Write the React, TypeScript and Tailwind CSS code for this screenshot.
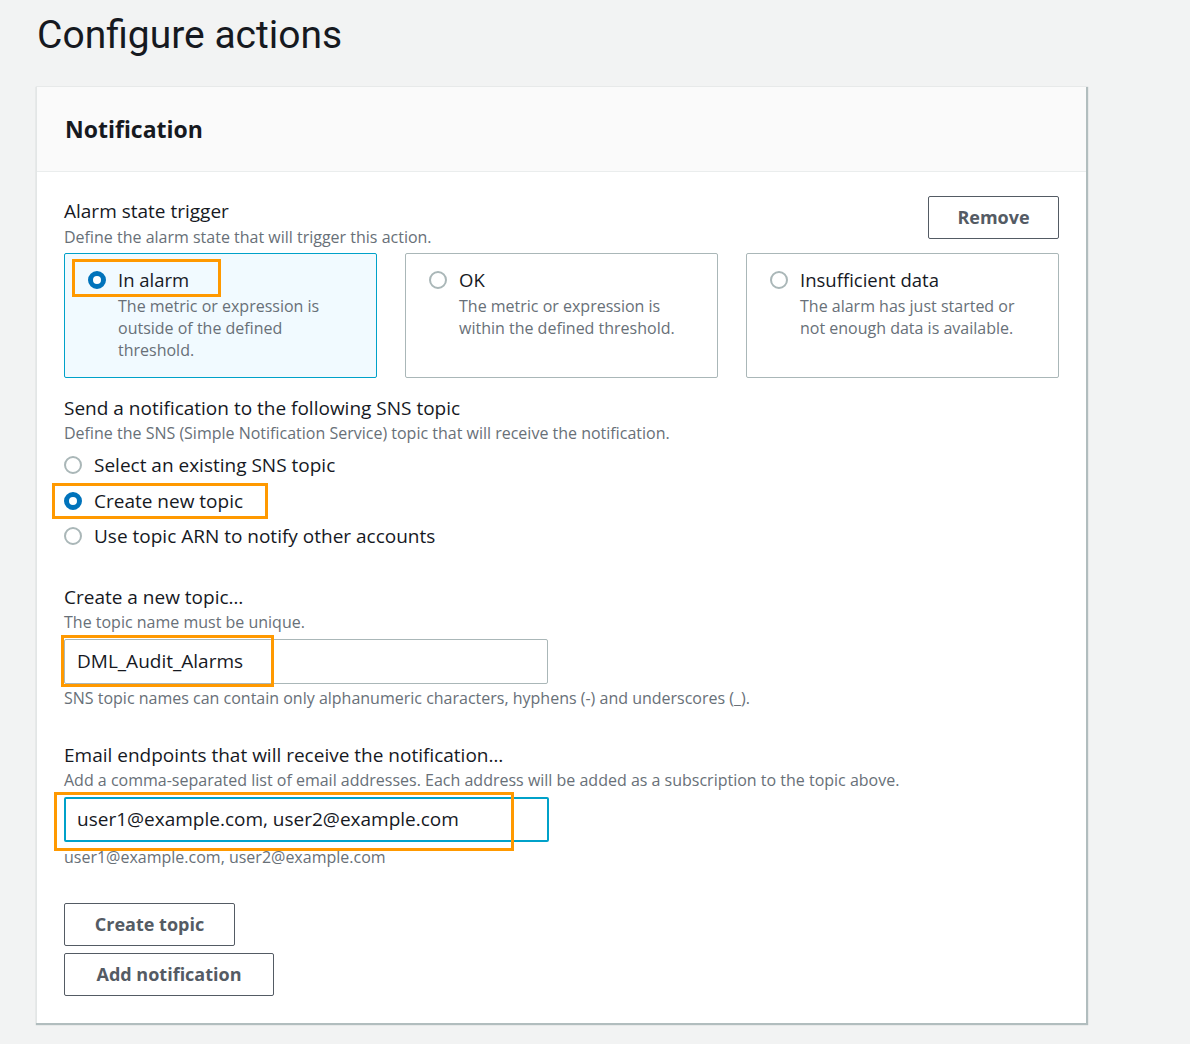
import React from "react";

const font = { fontFamily: "'Open Sans', 'Liberation Sans', sans-serif" };

function Radio({ checked }: { checked?: boolean }) {
  return checked ? (
    <span className="inline-block w-[18px] h-[18px] rounded-full border-[5px] border-[#0073bb] bg-white shrink-0" />
  ) : (
    <span className="inline-block w-[18px] h-[18px] rounded-full border-2 border-[#aab7b8] bg-white shrink-0" />
  );
}

function Tile({
  title,
  desc,
  checked,
  children,
}: {
  title: string;
  desc: string[];
  checked?: boolean;
  children?: React.ReactNode;
}) {
  return (
    <div
      className={`relative h-[125px] rounded-[2px] border pl-[23px] pr-4 pt-[13px] ${
        checked ? "border-[#00a1c9] bg-[#f1faff]" : "border-[#aab7b8] bg-white"
      }`}
    >
      {children}
      <div className="flex items-center gap-[12px] h-[26px]">
        <Radio checked={checked} />
        <span className="text-[18.5px] text-[#16191f]">{title}</span>
      </div>
      <div className="mt-[2px] pl-[30px] text-[16px] leading-[22px] text-[#687078]">
        {desc.map((d, i) => (
          <div key={i}>{d}</div>
        ))}
      </div>
    </div>
  );
}

function Orange({ className }: { className: string }) {
  return <div className={`absolute border-[3px] border-[#ff9900] pointer-events-none ${className}`} />;
}

function Btn({ children, w }: { children: React.ReactNode; w: string }) {
  return (
    <div
      className={`${w} h-[43px] flex items-center justify-center rounded-[2px] border border-[#545b64] bg-white text-[18px] font-bold text-[#545b64]`}
    >
      {children}
    </div>
  );
}

export default function App() {
  return (
    <div className="w-[1190px] h-[1044px] bg-[#f2f3f3] overflow-hidden" style={font}>
      <div className="h-[87px] pl-[37px] pt-[11px]">
        <h1
          className="text-[39px] leading-[48px] text-[#16191f] font-normal"
          style={{ fontFamily: "Roboto, 'Liberation Sans', sans-serif" }}
        >
          Configure actions
        </h1>
      </div>
      <div className="ml-[36px] w-[1050px] bg-white border-l border-[#e3e6e6] shadow-[1px_1px_1px_1px_rgba(170,183,184,0.9)]">
        <div className="h-[85px] bg-[#fafafa] border-b border-[#eaeded] flex items-center pl-[28px]">
          <h2 className="text-[23px] font-bold text-[#16191f]">Notification</h2>
        </div>
        <div className="px-[27px] pt-[24px] pb-[27px]">
          <div className="flex justify-between items-start">
            <div className="pt-[2px]">
              <div className="text-[19px] leading-[26px] text-[#16191f]">Alarm state trigger</div>
              <div className="mt-[2px] text-[16px] leading-[22px] text-[#687078]">
                Define the alarm state that will trigger this action.
              </div>
            </div>
            <Btn w="w-[131px]">Remove</Btn>
          </div>
          <div className="grid grid-cols-3 gap-[28px] mt-[5px]">
            <Tile
              checked
              title="In alarm"
              desc={["The metric or expression is", "outside of the defined", "threshold."]}
            >
              <Orange className="left-[7px] top-[5px] w-[149px] h-[38px]" />
            </Tile>
            <Tile title="OK" desc={["The metric or expression is", "within the defined threshold."]} />
            <Tile
              title="Insufficient data"
              desc={["The alarm has just started or", "not enough data is available."]}
            />
          </div>

          <div className="mt-[17px] text-[19px] leading-[26px] text-[#16191f]">
            Send a notification to the following SNS topic
          </div>
          <div className="mt-[1px] text-[16px] leading-[22px] text-[#687078]">
            Define the SNS (Simple Notification Service) topic that will receive the notification.
          </div>
          <div className="mt-[8px] flex flex-col gap-[10px]">
            <div className="flex items-center gap-[12px] h-[26px]">
              <Radio />
              <span className="text-[19px] text-[#16191f]">Select an existing SNS topic</span>
            </div>
            <div className="relative flex items-center gap-[12px] h-[26px]">
              <Orange className="-left-[12px] -top-[5px] w-[216px] h-[36px]" />
              <Radio checked />
              <span className="text-[19px] text-[#16191f]">Create new topic</span>
            </div>
            <div className="flex items-center gap-[12px] h-[26px] -mt-[1px]">
              <Radio />
              <span className="text-[19px] text-[#16191f]">Use topic ARN to notify other accounts</span>
            </div>
          </div>

          <div className="mt-[35px] text-[19px] leading-[26px] text-[#16191f]">Create a new topic…</div>
          <div className="mt-[1px] text-[16px] leading-[22px] text-[#687078]">The topic name must be unique.</div>
          <div className="relative mt-[6px] w-[484px] h-[45px] border border-[#aab7b8] rounded-[2px] flex items-center pl-[12px] text-[19px] text-[#16191f]">
            <Orange className="-left-[4px] -top-[5px] w-[213px] h-[52px]" />
            DML_Audit_Alarms
          </div>
          <div className="mt-[3px] text-[16px] leading-[22px] text-[#687078]">
            SNS topic names can contain only alphanumeric characters, hyphens (-) and underscores (_).
          </div>

          <div className="mt-[33px] text-[19px] leading-[26px] text-[#16191f]">
            Email endpoints that will receive the notification…
          </div>
          <div className="mt-[1px] text-[16px] leading-[22px] text-[#687078]">
            Add a comma-separated list of email addresses. Each address will be added as a subscription to the topic above.
          </div>
          <div className="relative mt-[6px] w-[485px] h-[45px] border-2 border-[#00a1c9] rounded-[2px] flex items-center pl-[11px] text-[19px] text-[#16191f]">
            <Orange className="-left-[12px] -top-[7px] w-[460px] h-[59px]" />
            user1@example.com, user2@example.com
          </div>
          <div className="mt-[4px] text-[16px] leading-[22px] text-[#687078]">
            user1@example.com, user2@example.com
          </div>

          <div className="mt-[35px] flex flex-col gap-[7px]">
            <Btn w="w-[171px]">Create topic</Btn>
            <Btn w="w-[210px]">Add notification</Btn>
          </div>
        </div>
      </div>
    </div>
  );
}
